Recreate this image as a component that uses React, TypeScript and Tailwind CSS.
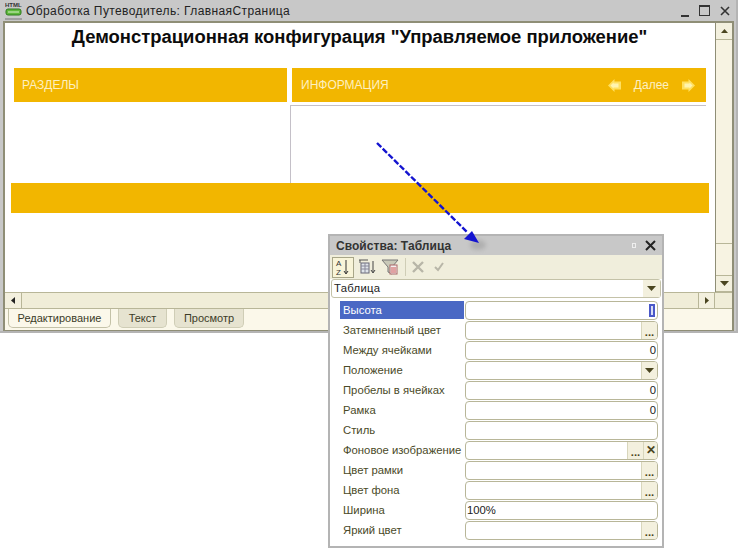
import React from 'react';

const font = "[font-family:'Liberation_Sans',Arial,sans-serif]";

const props = [
  { name: 'Высота', value: '', align: 'right', selected: true, caret: true },
  { name: 'Затемненный цвет', value: '', dots: true },
  { name: 'Между ячейками', value: '0' },
  { name: 'Положение', value: '', drop: true },
  { name: 'Пробелы в ячейках', value: '0' },
  { name: 'Рамка', value: '0' },
  { name: 'Стиль', value: '' },
  { name: 'Фоновое изображение', value: '', dots: true, clear: true },
  { name: 'Цвет рамки', value: '', dots: true },
  { name: 'Цвет фона', value: '', dots: true },
  { name: 'Ширина', value: '100%', left: true },
  { name: 'Яркий цвет', value: '', dots: true },
];

const DownArrow = () => (
  <svg width="9" height="5" viewBox="0 0 9 5">
    <path d="M0 0h9L4.5 5z" fill="#4a4520" />
  </svg>
);

const NavArrow = ({ dir }: { dir: 'left' | 'right' }) => (
  <svg width="13" height="13" viewBox="0 0 13 13">
    <path
      d={dir === 'left' ? 'M0 6.5L6.5 0v2.5H13v8H6.5V13z' : 'M13 6.5L6.5 0v2.5H0v8h6.5V13z'}
      fill="#ffe060"
    />
    <path
      d={dir === 'left' ? 'M2.5 6.5L5.5 3.5v1h5v4h-5v1z' : 'M10.5 6.5L7.5 3.5v1h-5v4h5v1z'}
      fill="#fff4b0"
    />
  </svg>
);

const HtmlIcon = () => (
  <svg width="17" height="20" viewBox="0 0 17 20">
    <text x="0" y="6" fontSize="6" fontWeight="700" fill="#333" fontFamily="Liberation Sans">HTML</text>
    <rect x="1" y="8" width="15" height="6" rx="2" fill="#5fb83c" stroke="#2f7a1e" />
    <path d="M3 11h11" stroke="#d8f0c8" />
    <path d="M0 18h17" stroke="#777" />
  </svg>
);

const SortIcon = () => (
  <svg width="16" height="18" viewBox="0 0 16 18">
    <text x="1" y="8" fontSize="8" fill="#333" fontFamily="Liberation Sans">A</text>
    <text x="1" y="17" fontSize="8" fill="#333" fontFamily="Liberation Sans">Z</text>
    <path d="M11 2v13M9 13l2 3 2-3" stroke="#333" fill="none" />
  </svg>
);

const TreeIcon = () => (
  <svg width="18" height="18" viewBox="0 0 18 18">
    <path d="M1 2h9M2 2v3" stroke="#555" />
    <rect x="3" y="5" width="8" height="10" fill="#dfe4ea" stroke="#667" />
    <path d="M3 8h8M3 11h8M7 5v10" stroke="#889" />
    <path d="M15 3v11M13 12l2 3 2-3" stroke="#444" fill="none" />
  </svg>
);

const FilterIcon = () => (
  <svg width="18" height="18" viewBox="0 0 18 18">
    <path d="M1 2h16l-6 7v7l-4-2V9z" fill="#c9c9b8" stroke="#777" />
    <rect x="9" y="7" width="7" height="9" fill="#f4f0f0" stroke="#a66" />
    <path d="M10 10h5M10 12h5M10 14h5" stroke="#c55" />
  </svg>
);

const PropRow = ({ p }: { p: (typeof props)[number] }) => (
  <div className="flex h-[20px] items-center">
    <div
      className={`w-[124px] h-[18px] pl-[3px] flex items-center whitespace-nowrap ${
        p.selected ? 'bg-[#4a68c4] text-white' : 'text-[#4a4a28]'
      }`}
    >
      {p.name}
    </div>
    <div className="ml-px w-[193px] h-[19px] flex items-center bg-white border border-[#b8b698] rounded-[4px] overflow-hidden">
      <div className={`flex-1 px-px text-[#222] ${p.left ? 'text-left' : 'text-right'}`}>
        {p.value}
        {p.caret && (
          <span className="inline-block align-middle w-[6px] h-[13px] mr-px bg-[#d8dcf4] border-2 border-[#4a58c8]" />
        )}
      </div>
      {p.dots && (
        <div className="w-[16px] h-full flex items-end justify-center bg-[#f3f0de] border-l border-[#d8d6bc] text-[#4a4520] font-bold leading-[14px]">
          ...
        </div>
      )}
      {p.clear && (
        <div className="w-[14px] h-full flex items-center justify-center bg-[#f3f0de] border-l border-[#d8d6bc] text-[#4a4520] font-bold text-[12px]">
          ✕
        </div>
      )}
      {p.drop && (
        <div className="w-[16px] h-full flex items-center justify-center bg-[#f3f0de] border-l border-[#d8d6bc]">
          <DownArrow />
        </div>
      )}
    </div>
  </div>
);

const Tab = ({ label, active }: { label: string; active?: boolean }) => (
  <div
    className={`h-[19px] flex items-center justify-center rounded-b-[5px] border-b border-x text-[11px] text-[#3c3c28] ${
      active
        ? 'w-[103px] bg-[#fbf8ea] border-[#c4c2a8]'
        : 'bg-[#e6e3d0] border-[#cfcdb6]'
    }`}
  >
    {label}
  </div>
);

export default function App() {
  return (
    <div className={`relative w-[738px] h-[550px] bg-white overflow-hidden text-[11.3px] ${font}`}>
      {/* main window */}
      <div className="h-[333px] flex flex-col bg-[#c8c8c8] border-r-2 border-b-2 border-[#b4b4b4]">
        <div className="h-[21px] flex items-center pl-[5px] pr-[6px] shrink-0">
          <HtmlIcon />
          <span className="ml-[4px] text-[12px] tracking-[0.4px] text-[#222]">Обработка Путеводитель: ГлавнаяСтраница</span>
          <div className="ml-auto flex items-center gap-[10px] text-[#333]">
            <span className="w-[8px] h-[2px] mt-[10px] bg-[#333]" />
            <span className="w-[11px] h-[11px] border border-[#333] border-t-2" />
            <svg width="10" height="10" viewBox="0 0 10 10"><path d="M1 1l8 8M9 1l-8 8" stroke="#333" strokeWidth="1.6" /></svg>
          </div>
        </div>

        <div className="flex-1 flex flex-col ml-[3px] mr-[2px] border-t-2 border-l-2 border-r-2 border-[#8f8e76] bg-[#fbf8ea] min-h-0">
          <div className="flex-1 flex min-h-0">
            <div className="flex-1 bg-white">
              <h1 className="h-[24px] mt-[2px] text-center text-[18.45px] leading-[24px] font-bold text-[#0c0c0c] pr-[1px]">
                Демонстрационная конфигурация "Управляемое приложение"
              </h1>
              <div className="flex mt-[19px] ml-[9px] mr-[9px] gap-[5px]">
                <div className="w-[273px] h-[34px] flex items-center pl-[8px] bg-[#f2b600] text-[#fdf0c0] text-[12px]">РАЗДЕЛЫ</div>
                <div className="flex-1 h-[34px] flex items-center pl-[9px] pr-[11px] bg-[#f2b600] text-[#fdf0c0] text-[12px]">
                  ИНФОРМАЦИЯ
                  <div className="ml-auto flex items-center gap-[13px]">
                    <NavArrow dir="left" />
                    <span className="text-[12px]">Далее</span>
                    <NavArrow dir="right" />
                  </div>
                </div>
              </div>
              <div className="ml-[285px] mr-[9px] mt-[3px] h-[78px] border-t border-l border-[#c4c0c8]" />
              <div className="h-[30px] ml-[6px] mr-[6px] bg-[#f2b600]" />
            </div>
            {/* vertical scrollbar */}
            <div className="w-[17px] flex flex-col border-l border-[#8f8e76] bg-[#f7f3e2]">
              <div className="h-[17px] flex items-center justify-center bg-[#f3f0de] border-b border-[#b8b698]">
                <svg width="7" height="4" viewBox="0 0 7 4"><path d="M0 4h7L3.5 0z" fill="#4a4520" /></svg>
              </div>
              <div className="h-[204px] bg-[#f7f3e2] border-b border-[#b8b698]" />
              <div className="flex-1" />
              <div className="h-[17px] flex items-center justify-center bg-[#f3f0de] border-y border-[#b8b698]">
                <DownArrow />
              </div>
            </div>
          </div>
          {/* horizontal scrollbar */}
          <div className="h-[17px] shrink-0 flex bg-[#f0edd8] border-y border-[#b8b698]">
            <div className="w-[17px] flex items-center justify-center bg-[#f3f0de] border-r border-[#b8b698]">
              <svg width="4" height="7" viewBox="0 0 4 7"><path d="M4 0v7L0 3.5z" fill="#222" /></svg>
            </div>
            <div className="flex-1" />
            <div className="w-[17px] flex items-center justify-center bg-[#f3f0de] border-x border-[#b8b698]">
              <svg width="4" height="7" viewBox="0 0 4 7"><path d="M0 0v7l4-3.5z" fill="#4a4520" /></svg>
            </div>
            <div className="w-[17px]" />
          </div>
          {/* tabs */}
          <div className="h-[22px] shrink-0 flex items-start gap-[7px] pl-[3px] bg-[#fbf8ea] border-b border-[#8f8e76]">
            <Tab label="Редактирование" active />
            <div className="w-[49px]"><Tab label="Текст" /></div>
            <div className="w-[70px]"><Tab label="Просмотр" /></div>
          </div>
        </div>
      </div>

      {/* properties panel */}
      <div className="absolute left-[328px] top-[234px] w-[336px] h-[314px] flex flex-col bg-white border-[2px] border-[#b4b4b4]">
        <div className="h-[19px] shrink-0 flex items-center pl-[6px] pr-[6px] bg-[#c8c8c8]">
          <span className="text-[12px] font-bold tracking-[0.05px] text-[#333]">Свойства: Таблица</span>
          <span className="ml-auto mr-[9px] w-[4px] h-[5px] border border-[#eee]" />
          <svg width="11" height="11" viewBox="0 0 11 11"><path d="M1 1l9 9M10 1l-9 9" stroke="#222" strokeWidth="2" /></svg>
        </div>
        <div className="h-[24px] shrink-0 flex items-center gap-[3px] pl-[2px] bg-[#f0eedc]">
          <div className="w-[22px] h-[21px] flex items-center justify-center border border-[#a8a688] bg-[#f8f4d8]"><SortIcon /></div>
          <div className="w-[20px] flex justify-center"><TreeIcon /></div>
          <div className="w-[20px] flex justify-center"><FilterIcon /></div>
          <div className="w-px h-[18px] bg-[#cfcdb6] ml-[2px]" />
          <svg className="ml-[3px]" width="12" height="12" viewBox="0 0 12 12"><path d="M1 1l10 10M11 1L1 11" stroke="#b8b6a8" strokeWidth="2.4" /></svg>
          <svg className="ml-[7px]" width="10" height="10" viewBox="0 0 10 10"><path d="M1 5l3 3 5-7" stroke="#b8b6a8" strokeWidth="2" fill="none" /></svg>
        </div>
        <div className="mx-px h-[19px] shrink-0 flex items-center bg-white border border-[#c4c2a8] rounded-[3px] text-[#222]">
          <span className="flex-1 pl-[2px] tracking-[0.3px]">Таблица</span>
          <div className="w-[17px] h-full flex items-center justify-center bg-[#f3f0de]"><DownArrow /></div>
        </div>
        <div className="mt-[2px] pl-[10px] flex flex-col">
          {props.map((p) => (
            <PropRow key={p.name} p={p} />
          ))}
        </div>
      </div>

      {/* dashed arrow, drawn over the panel */}
      <svg className="absolute left-[370px] top-[135px]" width="125" height="120" viewBox="0 0 125 120">
        <ellipse className="blur-[2px]" cx="108" cy="110" rx="8" ry="5" fill="#777" opacity="0.3" />
        <path d="M7 8L98 98" stroke="#1414d0" strokeWidth="2.4" strokeDasharray="6 2" fill="none" />
        <path d="M109 108l-15-4 8-8z" fill="#1414d0" />
      </svg>
    </div>
  );
}
